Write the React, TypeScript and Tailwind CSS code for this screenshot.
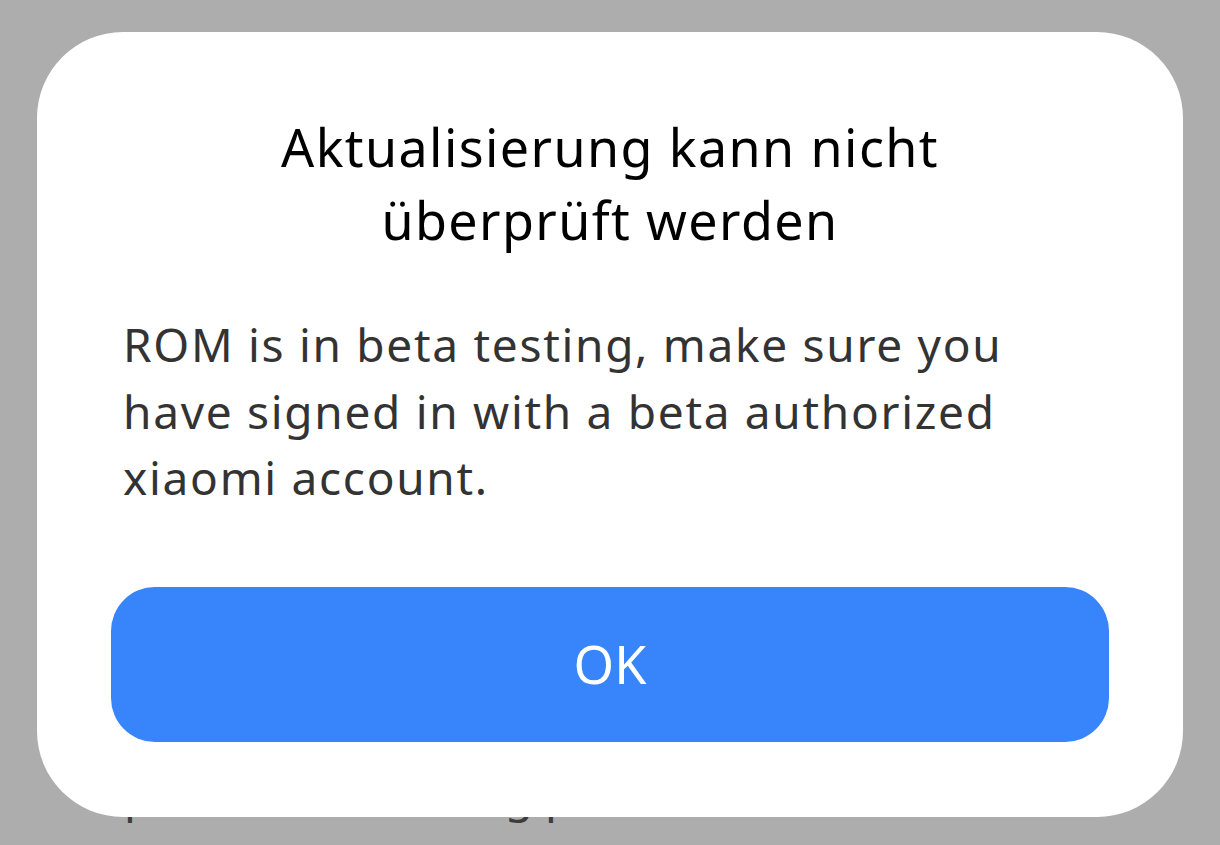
import React from "react";

const font = { fontFamily: '"Noto Sans", "Liberation Sans", sans-serif' };

const App: React.FC = () => {
  return (
    <div
      className="relative h-[845px] w-[1220px] overflow-hidden bg-[#adadad]"
      style={font}
    >
      {/* Page behind the dimmed overlay */}
      <div className="pt-[761px] pl-[88px]">
        <p className="text-[46px] leading-[66px] text-[#3c3c3c] whitespace-nowrap">
          Open recent ranking plan
        </p>
      </div>

      {/* Dialog */}
      <div className="absolute inset-0 pt-[32px] px-[37px]">
        <div className="bg-white rounded-[86px] pt-[78px] pb-[75px] px-[74px] flex flex-col">
          <h2 className="text-center text-[52px] leading-[73px] tracking-[1.4px] text-black font-normal">
            Aktualisierung kann nicht
            <br />
            überprüft werden
          </h2>

          <p className="mt-[55px] px-[12px] text-[46px] leading-[66.5px] tracking-[1.7px] text-[#333333] whitespace-nowrap">
            ROM is in beta testing, make sure you
            <br />
            have signed in with a beta authorized
            <br />
            xiaomi account.
          </p>

          <button className="mt-[76px] h-[155px] w-full rounded-[44px] bg-[#3784fb] text-white text-[52px] leading-none">
            OK
          </button>
        </div>
      </div>
    </div>
  );
};

export default App;
